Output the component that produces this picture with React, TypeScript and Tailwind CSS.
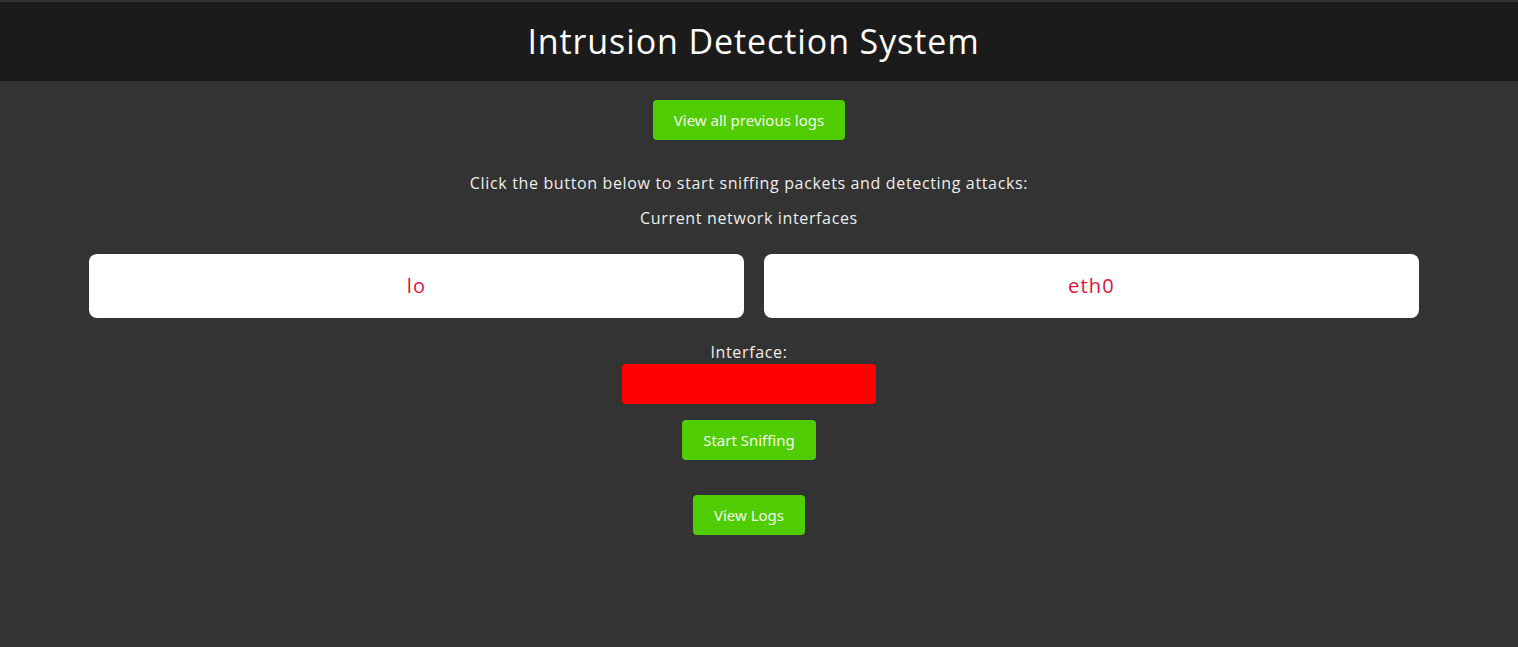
import React from "react";

const font = { fontFamily: '"Open Sans", "Liberation Sans", sans-serif' };

const GreenButton: React.FC<{ label: string; className?: string }> = ({ label, className }) => (
  <button
    className={`h-10 rounded bg-[#4fcd00] text-[15px] text-[#f4fbe9] font-['Noto_Sans',sans-serif] ${className ?? ""}`}
  >
    {label}
  </button>
);

const App: React.FC = () => {
  return (
    <div className="min-h-[647px] bg-[#333333] text-[#eeeeee]" style={font}>
      <header className="border-t-2 border-[#333333] bg-[#1b1b1b] h-[81px] flex items-center justify-center">
        <h1 className="text-[34px] text-white pr-[11px] tracking-[0.9px]">Intrusion Detection System</h1>
      </header>

      <main className="w-[1498px] flex flex-col items-center">
        <GreenButton label="View all previous logs" className="mt-[19px] w-[192px]" />
        <p className="mt-[31px] text-[16px] leading-6 tracking-[0.65px]">
          Click the button below to start sniffing packets and detecting attacks:
        </p>
        <p className="mt-[11px] text-[16px] leading-6 tracking-[0.65px]">Current network interfaces</p>
      </main>

      <div className="mt-[24px] pl-[89px] pr-[99px] grid grid-cols-2 gap-5">
        <div className="h-16 rounded-lg bg-white flex items-center justify-center text-[20px] tracking-[1.2px] text-[#dc143c]">
          lo
        </div>
        <div className="h-16 rounded-lg bg-white flex items-center justify-center text-[20px] tracking-[1.2px] text-[#dc143c]">
          eth0
        </div>
      </div>

      <div className="w-[1498px] flex flex-col items-center">
        <label className="mt-[22px] text-[16px] leading-6 tracking-[0.65px]">Interface:</label>
        <div className="w-[254px] h-10 rounded bg-[#ff0000]" />
        <GreenButton label="Start Sniffing" className="mt-4 w-[134px]" />
        <GreenButton label="View Logs" className="mt-[35px] w-[112px]" />
      </div>
    </div>
  );
};

export default App;
